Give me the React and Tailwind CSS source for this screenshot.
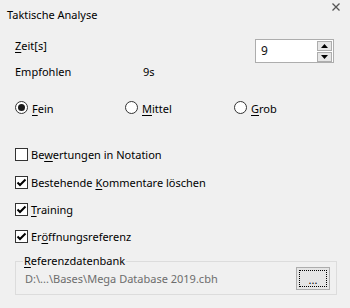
import React from 'react';

const Radio = ({ checked, children }) => (
  <div className="flex items-start gap-[4px]">
    <span className="flex h-[13px] w-[13px] items-center justify-center rounded-full border border-[#333] bg-white">
      {checked && <span className="h-[7px] w-[7px] rounded-full bg-[#1a1a1a]" />}
    </span>
    <span className="leading-[16px]">{children}</span>
  </div>
);

const Check = ({ checked, children, className = '' }) => (
  <div className={`flex items-start gap-[3px] ${className}`}>
    <span className="mt-[1px] flex h-[13px] w-[13px] items-center justify-center border border-[#333] bg-white">
      {checked && (
        <svg width="11" height="11" viewBox="0 0 11 11">
          <path d="M1.5 5.5 L4 8 L9.5 2.5" fill="none" stroke="#000" strokeWidth="2" />
        </svg>
      )}
    </span>
    <span className="leading-[16px]">{children}</span>
  </div>
);

export default function App() {
  return (
    <div className="h-[308px] w-[350px] overflow-hidden bg-[#f0f0f0] font-['Segoe_UI','Noto_Sans',sans-serif] text-[11px] text-black">
      {/* title bar */}
      <div className="flex h-[37px] items-start justify-between pl-[7px] pr-[10px] pt-[7px]">
        <span className="leading-[16px]">Taktische Analyse</span>
        <svg className="-mt-[4px]" width="8" height="8" viewBox="0 0 8 8">
          <path d="M0.5 0.5 L7.5 7.5 M7.5 0.5 L0.5 7.5" stroke="#555" strokeWidth="1.3" />
        </svg>
      </div>

      <div className="px-[15px]">
        {/* Zeit */}
        <div className="flex items-start justify-between">
          <span className="mt-[1px] leading-[16px]">
            <span className="underline underline-offset-2">Z</span>eit[s]
          </span>
          <div className="mt-[2px] mr-[1px] flex h-[24px] w-[79px] items-center border border-[#adadad] bg-white pl-[5px] pr-[1px]">
            <span className="flex-1 text-[12px] leading-[16px] text-[#111]">9</span>
            <div className="flex flex-col gap-[1px]">
              <div className="flex h-[10px] w-[15px] items-center justify-center border border-[#adadad] bg-[#e6e6e6]">
                <svg width="7" height="4" viewBox="0 0 7 4"><path d="M0 4 L3.5 0 L7 4 Z" fill="#000" /></svg>
              </div>
              <div className="flex h-[10px] w-[15px] items-center justify-center border border-[#adadad] bg-[#e6e6e6]">
                <svg width="7" height="4" viewBox="0 0 7 4"><path d="M0 0 L3.5 4 L7 0 Z" fill="#000" /></svg>
              </div>
            </div>
          </div>
        </div>

        {/* Empfohlen */}
        <div className="mt-[1px] flex leading-[16px]">
          <span className="w-[128px]">Empfohlen</span>
          <span>9s</span>
        </div>

        {/* Radios */}
        <div className="mt-[21px] flex">
          <div className="w-[110px]">
            <Radio checked>
              <span className="underline underline-offset-2">F</span>ein
            </Radio>
          </div>
          <div className="w-[109px]">
            <Radio>
              <span className="underline underline-offset-2">M</span>ittel
            </Radio>
          </div>
          <Radio>
            <span className="underline underline-offset-2">G</span>rob
          </Radio>
        </div>

        {/* Checkboxes */}
        <Check className="mt-[30px]">
          Be<span className="underline underline-offset-2">w</span>ertungen in Notation
        </Check>
        <Check checked className="mt-[12px]">
          Bestehende <span className="underline underline-offset-2">K</span>ommentare löschen
        </Check>
        <Check checked className="mt-[11px]">
          <span className="underline underline-offset-2">T</span>raining
        </Check>
        <Check checked className="mt-[11px]">
          Er<span className="underline underline-offset-2">ö</span>ffnungsreferenz
        </Check>

        {/* Referenzdatenbank group */}
        <div className="relative mt-[16px] mr-[-2px] flex h-[34px] items-center justify-between border border-[#dcdcdc] pl-[9px] pr-[6px]">
          <span className="absolute left-[7px] top-[-9px] bg-[#f0f0f0] px-[1px] leading-[16px]">
            <span className="underline underline-offset-2">R</span>eferenzdatenbank
          </span>
          <span className="mt-[1px] leading-[16px] text-[#6d6d6d]">D:\...\Bases\Mega Database 2019.cbh</span>
          <div className="h-[23px] w-[34px] border border-[#adadad] bg-[#e5e5e5] p-[2px]">
            <div className="flex h-full items-end justify-center border border-dotted border-black pb-[1px] leading-[10px]">
              ...
            </div>
          </div>
        </div>
      </div>
    </div>
  );
}
